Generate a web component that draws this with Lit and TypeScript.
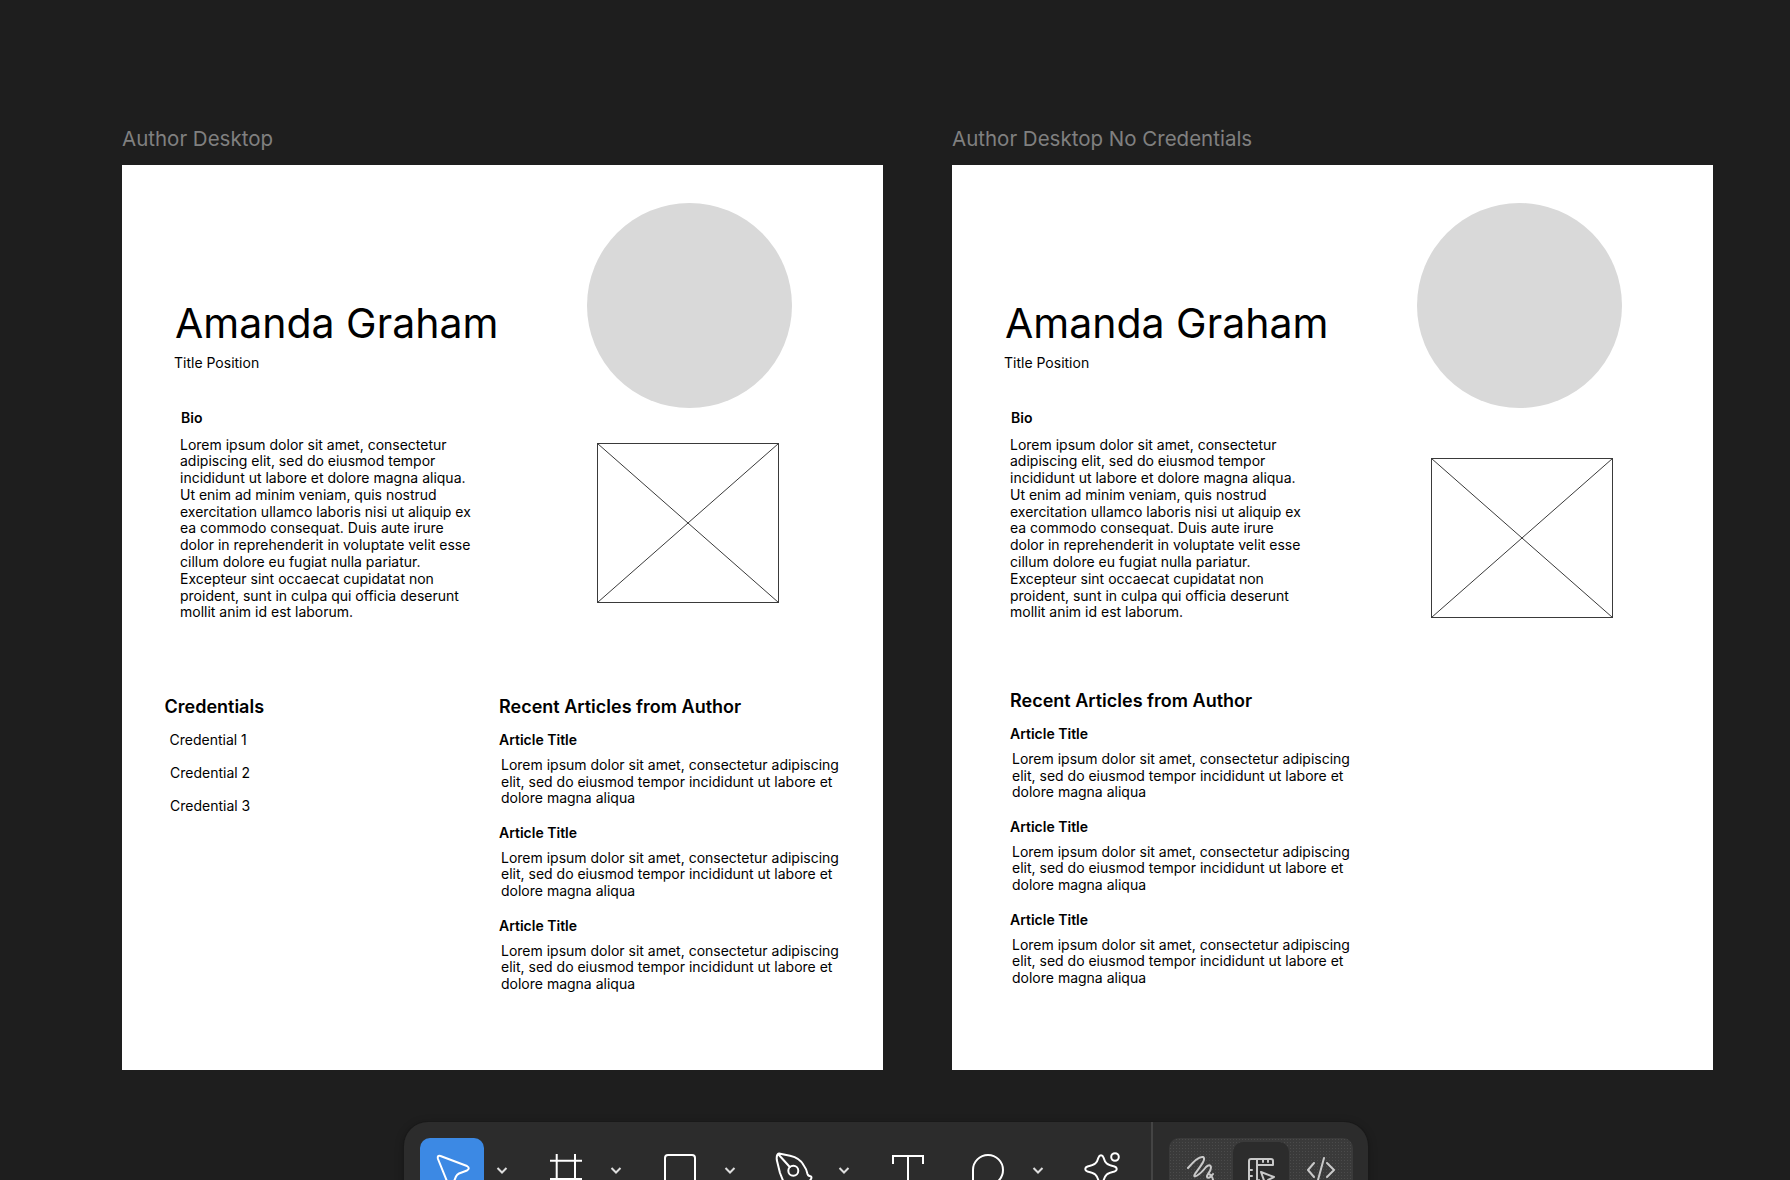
import { LitElement, html, css, svg } from "lit";
import { customElement } from "lit/decorators.js";

const BIO = "Lorem ipsum dolor sit amet, consectetur adipiscing elit, sed do eiusmod tempor incididunt ut labore et dolore magna aliqua. Ut enim ad minim veniam, quis nostrud exercitation ullamco laboris nisi ut aliquip ex ea commodo consequat. Duis aute irure dolor in reprehenderit in voluptate velit esse cillum dolore eu fugiat nulla pariatur. Excepteur sint occaecat cupidatat non proident, sunt in culpa qui officia deserunt mollit anim id est laborum.";
const ARTICLE = "Lorem ipsum dolor sit amet, consectetur adipiscing elit, sed do eiusmod tempor incididunt ut labore et dolore magna aliqua";

const icon = (body: unknown, cls = "") => html`<svg class="ico ${cls}" viewBox="0 0 64 64" width="64" height="64" fill="none" stroke="currentColor" stroke-width="2" stroke-linecap="round" stroke-linejoin="round">${body}</svg>`;

const chevron = html`<svg class="chev" viewBox="0 0 36 64" width="36" height="64" fill="none" stroke="#ddd" stroke-width="2"><path d="M13.5 30 L18 34.5 L22.5 30"/></svg>`;

@customElement("app-root")
export class AppRoot extends LitElement {
  static styles = css`
    :host { display: block; width: 1790px; height: 1180px; overflow: hidden; background: #1e1e1e; font-family: Inter, "Noto Sans", sans-serif; }
    .canvas { display: flex; gap: 69px; padding: 126px 0 0 122px; }
    .col { width: 761px; flex: none; }
    .label { font-size: 20.5px; line-height: 25px; height: 39px; color: #808080; }
    .frame { background: #fff; height: 905px; color: #000; overflow: hidden; }
    .top { display: flex; }
    .intro { width: 464.7px; flex: none; box-sizing: border-box; padding: 133px 0 0 53px; }
    h1 { margin: 0; font-weight: 400; font-size: 41px; line-height: 50px; }
    .pos { font-size: 14px; line-height: 17px; margin: 5.5px 0 0 -1px; }
    .bio-h { font-size: 14px; font-weight: 600; line-height: 17px; margin: 38px 0 0 6px; }
    .bio { font-size: 14px; line-height: 16.8px; margin: 11px 0 0 5px; width: 292px; }
    .media { padding-top: 37.7px; }
    .circle { width: 205px; height: 205px; border-radius: 50%; background: #d9d9d9; }
    .wire { display: block; margin: 35px 0 0 10.6px; }
    .nc .wire { margin: 50px 0 0 14.6px; }
    .bottom { display: flex; margin-top: 75px; }
    .nc .bottom { margin-top: 69px; padding-left: 58px; }
    .creds { width: 334.5px; flex: none; padding-left: 42.5px; box-sizing: content-box; }
    h2 { margin: 0; font-size: 18px; font-weight: 600; line-height: 22px; }
    .cred { font-size: 14px; line-height: 17px; margin: 16px 0 0 5.5px; }
    .cred:first-of-type { margin: 12.5px 0 0 5px; }
    .articles { width: 345px; }
    .a-h { font-size: 14px; font-weight: 600; line-height: 17px; margin-top: 16.5px; }
    h2 + .a-h { margin-top: 12.5px; }
    .a-b { font-size: 14px; line-height: 16.8px; margin: 9px 0 0 2px; width: 343px; }
    .toolbar { display: flex; align-items: flex-start; width: 964px; height: 96px; box-sizing: border-box; margin: 52px 0 0 404px; padding: 16px; background: #2c2c2c; border-radius: 24px; box-shadow: 0 0 0 1px #191919, 0 2px 10px rgba(0,0,0,.3); color: #fff; }
    .tool { width: 64px; height: 64px; flex: none; border-radius: 10px; }
    .tool.on { background: #3c89e4; }
    .ico, .chev { display: block; }
    .chev { flex: none; margin-right: 14px; }
    .t { margin-right: 16px; }
    .sep { width: 2px; height: 96px; margin: -16px 16px 0 17px; background: #444; flex: none; }
    .seg { display: flex; width: 184px; height: 64px; flex: none; border-radius: 10px; color: #c9c9c9; background-color: #3a3a3a; background-image: radial-gradient(circle, #4b4b4b .7px, transparent .9px); background-size: 3px 3px; }
    .seg-b { width: 64px; height: 64px; flex: none; }
    .seg-b.on { width: 56px; height: 56px; margin-top: 4px; background: #2c2c2c; border-radius: 10px; }
  `;

  private frame(noCred: boolean) {
    return html`
      <div class="frame ${noCred ? "nc" : ""}">
        <div class="top">
          <div class="intro">
            <h1>Amanda Graham</h1>
            <div class="pos">Title Position</div>
            <div class="bio-h">Bio</div>
            <div class="bio">${BIO}</div>
          </div>
          <div class="media">
            <div class="circle"></div>
            <svg class="wire" width="182" height="160" viewBox="0 0 182 160" fill="none" stroke="#3a3a3a" stroke-width="1">
              <rect x=".5" y=".5" width="181" height="159"/>
              <path d="M.5 .5 L181.5 159.5 M181.5 .5 L.5 159.5"/>
            </svg>
          </div>
        </div>
        <div class="bottom">
          ${noCred ? "" : html`<div class="creds">
            <h2>Credentials</h2>
            <div class="cred">Credential 1</div>
            <div class="cred">Credential 2</div>
            <div class="cred">Credential 3</div>
          </div>`}
          <div class="articles">
            <h2>Recent Articles from Author</h2>
            ${[0, 1, 2].map(() => html`
              <div class="a-h">Article Title</div>
              <div class="a-b">${ARTICLE}</div>`)}
          </div>
        </div>
      </div>`;
  }

  render() {
    return html`
      <div class="canvas">
        <div class="col"><div class="label">Author Desktop</div>${this.frame(false)}</div>
        <div class="col"><div class="label">Author Desktop No Credentials</div>${this.frame(true)}</div>
      </div>
      <div class="toolbar">
        <div class="tool on">${icon(svg`<path d="M20.5 18 L47 28 Q50.5 30 47 32.5 L39 35.5 Q37 36.5 36 38.5 L32.5 47 Q30.5 50.5 28.5 47 L18 21 Q17 17 20.5 18 Z"/>`)}</div>
        ${chevron}
        <div class="tool">${icon(svg`<path d="M16 22.7 H48 M16 41 H48 M22.7 16 V48 M41 16 V48" stroke-linecap="butt"/>`)}</div>
        ${chevron}
        <div class="tool">${icon(svg`<rect x="17" y="17" width="30" height="34" rx="3"/>`)}</div>
        ${chevron}
        <div class="tool">${icon(svg`<path d="M17 15.5 L28 17.7 Q38 20 41.5 27 Q44.5 31 45.5 36 Q46 38 49 38.5 Q50.5 40 47 43.5 M17 15.5 Q14.2 16 14.8 22 L18 35 L22 45 M16.5 16.5 L27.8 29"/><circle cx="31.3" cy="32.7" r="5"/>`)}</div>
        ${chevron}
        <div class="tool t">${icon(svg`<path d="M17 26 V18 H47 V26 M32 18 V64" stroke-linecap="butt" stroke-linejoin="miter"/>`)}</div>
        <div class="tool">${icon(svg`<path d="M32 17 A15 15 0 0 1 32 47 H17 V32 A15 15 0 0 1 32 17 Z"/>`)}</div>
        ${chevron}
        <div class="tool">${icon(svg`<path d="M28.5 19.5 C29.5 16.5 32.5 16.5 33.5 19.5 C35 25 37 27 44.5 28.5 C47.5 29.5 47.5 32.5 44.5 33.5 C37 35 35 37 33.5 42.5 C32.5 45.5 29.5 45.5 28.5 42.5 C27 37 25 35 17.5 33.5 C14.5 32.5 14.5 29.5 17.5 28.5 C25 27 27 25 28.5 19.5 Z"/><circle cx="45" cy="19" r="3.8"/>`)}</div>
        <div class="sep"></div>
        <div class="seg">
          <div class="seg-b">${icon(svg`<path d="M19 30 C24 24 30 18 34 19 C38 21 30 30 26 36 C23 41 30 38 37 29 C42 24 44 30 39 36 C36 40 40 42 44 36 M39 36 C43 36 45 42 44 48"/>`)}</div>
          <div class="seg-b on">${icon(svg`<path d="M26 38 V41 Q26 43 24 43 H18 Q16 43 16 41 V19 Q16 17 18 17 H38 Q40 17 40 19 V23 H24 M24 17 V46 M30 17 V20 M35 17 V20 M16 28 H19 M16 34 H19 M28 30 L41 35 L35 38 L33 44 Z"/>`)}</div>
          <div class="seg-b">${icon(svg`<path d="M25 25 L19 32 L25 39 M38 25 L45 32 L38 39 M35 20 L29 42"/>`)}</div>
        </div>
      </div>
    `;
  }
}
